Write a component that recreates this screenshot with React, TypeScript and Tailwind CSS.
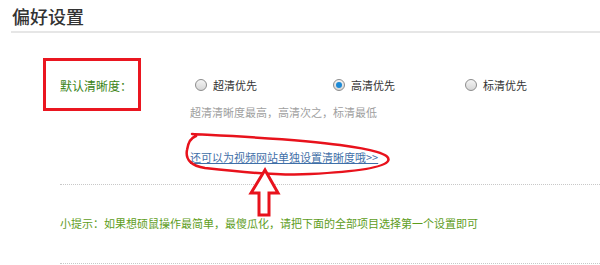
import React from 'react';

const cjk = "font-['Noto_Sans_CJK_SC','Noto_Sans',sans-serif]";

type RadioProps = { label: string; checked?: boolean; className?: string };

const Radio = ({ label, checked, className }: RadioProps) => (
  <label className={`flex items-center gap-[6px] ${className ?? ''}`}>
    <span className="flex h-[12px] w-[12px] items-center justify-center rounded-full border border-[#8c8c8c] bg-gradient-to-b from-[#f4f4f4] to-[#d6d6d6]">
      {checked && <span className="h-[6px] w-[6px] rounded-full bg-[#1c8ad6]" />}
    </span>
    <span className="text-[11px] leading-none text-[#333]">{label}</span>
  </label>
);

export default function App() {
  return (
    <div className={`relative h-[265px] w-[600px] overflow-hidden bg-white leading-none ${cjk}`}>
      {/* header */}
      <div className="pl-[12px] pt-[4px]">
        <h1 className="text-[18px] font-medium leading-[24px] text-[#333]">偏好设置</h1>
      </div>
      <div className="ml-[11px] mt-[3px] border-b-2 border-[#e6e6e6]" />

      {/* resolution row */}
      <div className="mt-[25px] flex">
        <div className="ml-[43px] flex h-[53px] w-[98px] items-center justify-end border-[3px] border-[#ea1620] pr-[6px] pt-[3px]">
          <span className="text-[12px] leading-none text-[#3a8416]">默认清晰度：</span>
        </div>
        <div className="ml-[49px] pt-[21px]">
          <div className="flex items-center pl-[5px]">
            <Radio label="超清优先" className="w-[138px]" />
            <Radio label="高清优先" checked className="w-[132px]" />
            <Radio label="标清优先" />
          </div>
          <p className="mt-[15px] text-[11px] leading-[12px] text-[#a0a0a0]">超清清晰度最高，高清次之，标清最低</p>
        </div>
      </div>

      {/* link */}
      <div className="mt-[32px] pl-[190px] text-[11px] leading-[14px]">
        <a className="text-[#3f6fa8] underline">还可以为视频网站单独设置清晰度哦&gt;&gt;</a>
      </div>

      <div className="ml-[60px] mt-[20px] border-t border-dotted border-[#c8c8c8]" />

      <p className="mt-[31px] pl-[60px] text-[11px] leading-[14px] text-[#5e9d1c]">
        小提示：如果想硕鼠操作最简单，最傻瓜化，请把下面的全部项目选择第一个设置即可
      </p>

      <div className="ml-[60px] mt-[33px] border-t border-dotted border-[#c8c8c8]" />

      {/* hand-drawn annotations */}
      <svg className="pointer-events-none absolute left-0 top-0" width="600" height="265" viewBox="0 0 600 265">
        <path
          d="M192 134 C230 136 300 139 340 145 C370 149 392 154 388 161 C384 168 350 172 310 174 C280 176 240 172 205 168 C192 166 185 160 187 150 C188 143 190 138 196 136"
          fill="none"
          stroke="#e8121c"
          strokeWidth="2.5"
          strokeLinecap="round"
        />
        <path
          d="M265 170 L278 193 L269 193 L269 215 L259 215 L259 193 L251 193 Z"
          fill="#fff"
          stroke="#e8121c"
          strokeWidth="3"
          strokeLinejoin="miter"
        />
      </svg>
    </div>
  );
}
